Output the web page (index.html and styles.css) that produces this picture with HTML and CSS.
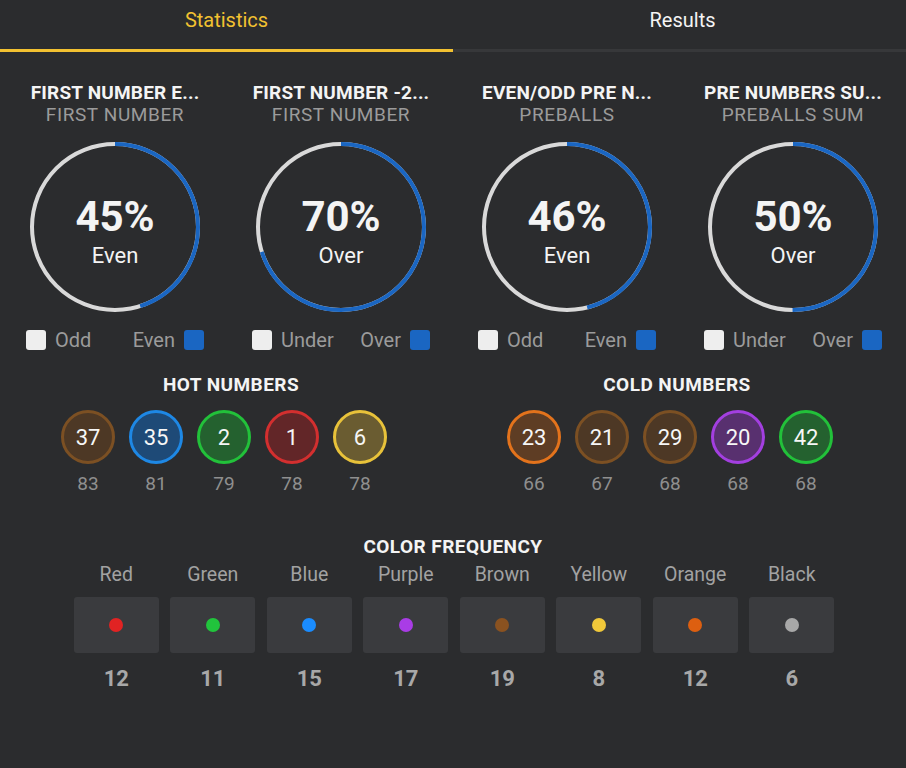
FILE: index.html
```html
<!DOCTYPE html>
<html lang="en">
<head>
<meta charset="utf-8">
<title>Statistics</title>
<link rel="stylesheet" href="styles.css">
</head>
<body>
<div class="tabs">
  <div class="tab active">Statistics</div>
  <div class="tab right">Results</div>
</div>

<div class="cards">
  <div class="card">
    <div class="card-title">FIRST NUMBER E...</div>
    <div class="card-sub">FIRST NUMBER</div>
    <div class="gauge">
      <svg class="ring" viewBox="0 0 170 170" width="170" height="170">
        <circle class="track" cx="85" cy="85" r="83"/>
        <circle class="fill" cx="85" cy="85" r="83" stroke-dasharray="234.7 521.5" transform="rotate(-90 85 85)"/>
      </svg>
      <div class="gauge-text"><div class="pct">45%</div><div class="pct-label">Even</div></div>
    </div>
    <div class="legend">
      <div class="leg"><span class="sq light"></span><span>Odd</span></div>
      <div class="leg"><span>Even</span><span class="sq blue"></span></div>
    </div>
  </div>

  <div class="card">
    <div class="card-title">FIRST NUMBER -2...</div>
    <div class="card-sub">FIRST NUMBER</div>
    <div class="gauge">
      <svg class="ring" viewBox="0 0 170 170" width="170" height="170">
        <circle class="track" cx="85" cy="85" r="83"/>
        <circle class="fill" cx="85" cy="85" r="83" stroke-dasharray="365.1 521.5" transform="rotate(-90 85 85)"/>
      </svg>
      <div class="gauge-text"><div class="pct">70%</div><div class="pct-label">Over</div></div>
    </div>
    <div class="legend">
      <div class="leg"><span class="sq light"></span><span>Under</span></div>
      <div class="leg"><span>Over</span><span class="sq blue"></span></div>
    </div>
  </div>

  <div class="card">
    <div class="card-title">EVEN/ODD PRE N...</div>
    <div class="card-sub">PREBALLS</div>
    <div class="gauge">
      <svg class="ring" viewBox="0 0 170 170" width="170" height="170">
        <circle class="track" cx="85" cy="85" r="83"/>
        <circle class="fill" cx="85" cy="85" r="83" stroke-dasharray="239.9 521.5" transform="rotate(-90 85 85)"/>
      </svg>
      <div class="gauge-text"><div class="pct">46%</div><div class="pct-label">Even</div></div>
    </div>
    <div class="legend">
      <div class="leg"><span class="sq light"></span><span>Odd</span></div>
      <div class="leg"><span>Even</span><span class="sq blue"></span></div>
    </div>
  </div>

  <div class="card">
    <div class="card-title">PRE NUMBERS SU...</div>
    <div class="card-sub">PREBALLS SUM</div>
    <div class="gauge">
      <svg class="ring" viewBox="0 0 170 170" width="170" height="170">
        <circle class="track" cx="85" cy="85" r="83"/>
        <circle class="fill" cx="85" cy="85" r="83" stroke-dasharray="260.8 521.5" transform="rotate(-90 85 85)"/>
      </svg>
      <div class="gauge-text"><div class="pct">50%</div><div class="pct-label">Over</div></div>
    </div>
    <div class="legend">
      <div class="leg"><span class="sq light"></span><span>Under</span></div>
      <div class="leg"><span>Over</span><span class="sq blue"></span></div>
    </div>
  </div>
</div>

<div class="hotcold">
  <div class="group">
    <div class="section-title">HOT NUMBERS</div>
    <div class="balls">
      <div class="ball-item"><div class="ball brown">37</div><div class="count">83</div></div>
      <div class="ball-item"><div class="ball blue">35</div><div class="count">81</div></div>
      <div class="ball-item"><div class="ball green">2</div><div class="count">79</div></div>
      <div class="ball-item"><div class="ball red">1</div><div class="count">78</div></div>
      <div class="ball-item"><div class="ball yellow">6</div><div class="count">78</div></div>
    </div>
  </div>
  <div class="group">
    <div class="section-title">COLD NUMBERS</div>
    <div class="balls">
      <div class="ball-item"><div class="ball orange">23</div><div class="count">66</div></div>
      <div class="ball-item"><div class="ball brown">21</div><div class="count">67</div></div>
      <div class="ball-item"><div class="ball brown">29</div><div class="count">68</div></div>
      <div class="ball-item"><div class="ball purple">20</div><div class="count">68</div></div>
      <div class="ball-item"><div class="ball green">42</div><div class="count">68</div></div>
    </div>
  </div>
</div>

<div class="freq">
  <div class="section-title">COLOR FREQUENCY</div>
  <div class="freq-row">
    <div class="freq-item"><div class="freq-name">Red</div><div class="freq-box"><span class="dot d-red"></span></div><div class="freq-num">12</div></div>
    <div class="freq-item"><div class="freq-name">Green</div><div class="freq-box"><span class="dot d-green"></span></div><div class="freq-num">11</div></div>
    <div class="freq-item"><div class="freq-name">Blue</div><div class="freq-box"><span class="dot d-blue"></span></div><div class="freq-num">15</div></div>
    <div class="freq-item"><div class="freq-name">Purple</div><div class="freq-box"><span class="dot d-purple"></span></div><div class="freq-num">17</div></div>
    <div class="freq-item"><div class="freq-name">Brown</div><div class="freq-box"><span class="dot d-brown"></span></div><div class="freq-num">19</div></div>
    <div class="freq-item"><div class="freq-name">Yellow</div><div class="freq-box"><span class="dot d-yellow"></span></div><div class="freq-num">8</div></div>
    <div class="freq-item"><div class="freq-name">Orange</div><div class="freq-box"><span class="dot d-orange"></span></div><div class="freq-num">12</div></div>
    <div class="freq-item"><div class="freq-name">Black</div><div class="freq-box"><span class="dot d-black"></span></div><div class="freq-num">6</div></div>
  </div>
</div>
</body>
</html>
```

FILE: styles.css
```css
html, body {
  margin: 0;
  padding: 0;
}
body {
  background: #2b2c2e;
  font-family: Roboto, "Noto Sans", "Liberation Sans", sans-serif;
  color: #f2f2f2;
  width: 906px;
  height: 768px;
  overflow: hidden;
}

/* tabs */
.tabs {
  display: grid;
  grid-template-columns: 453px 453px;
}
.tab {
  height: 52px;
  padding-top: 9px;
  box-sizing: border-box;
  line-height: 22px;
  font-size: 20px;
  text-align: center;
  color: #f4f4f4;
  border-bottom: 3px solid #37383a;
}
.tab.right {
  padding-left: 6px;
}
.tab.active {
  color: #f2c131;
  border-bottom-color: #f2c131;
}

/* cards */
.cards {
  display: grid;
  grid-template-columns: repeat(4, 226px);
  padding: 30px 0 0 2px;
}
.card {
  padding: 0 24px;
  display: flex;
  flex-direction: column;
  align-items: center;
}
.card-title {
  width: 178px;
  font-size: 19px;
  letter-spacing: 0.2px;
  line-height: 22px;
  font-weight: 700;
  text-align: center;
  white-space: nowrap;
  overflow: hidden;
  color: #f4f4f4;
}
.card-sub {
  width: 178px;
  font-size: 19px;
  letter-spacing: 0.6px;
  line-height: 22px;
  text-align: center;
  white-space: nowrap;
  color: #9b9b9b;
}
.gauge {
  margin-top: 16px;
  display: grid;
  width: 170px;
  height: 170px;
}
.gauge > * {
  grid-area: 1 / 1;
}
.ring {
  display: block;
}
.track {
  fill: none;
  stroke: #d9d9d9;
  stroke-width: 4;
}
.fill {
  fill: none;
  stroke: #1a66c2;
  stroke-width: 4;
}
.gauge-text {
  align-self: start;
  margin-top: 52px;
  text-align: center;
}
.pct {
  font-size: 42px;
  line-height: 46px;
  font-weight: 700;
  color: #f4f4f4;
}
.pct-label {
  font-size: 22px;
  line-height: 32px;
  color: #f4f4f4;
}
.legend {
  margin-top: 16px;
  width: 178px;
  height: 24px;
  display: flex;
  justify-content: space-between;
  align-items: center;
  font-size: 20px;
  color: #9b9b9b;
}
.leg {
  display: flex;
  align-items: center;
  gap: 9px;
}
.sq {
  width: 20px;
  height: 20px;
  border-radius: 3px;
  display: block;
}
.sq.light { background: #eeeeee; }
.sq.blue { background: #1a66c2; }

/* hot / cold */
.hotcold {
  display: grid;
  grid-template-columns: 446px 446px;
  padding: 22px 8px 0;
}
.group {
  display: flex;
  flex-direction: column;
  align-items: center;
}
.section-title {
  font-size: 19px;
  letter-spacing: 0.45px;
  line-height: 22px;
  font-weight: 700;
  color: #f4f4f4;
  text-align: center;
}
.balls {
  display: flex;
  margin-top: 14px;
}
.ball-item {
  width: 54px;
  margin-right: 14px;
  display: flex;
  flex-direction: column;
  align-items: center;
}
.ball {
  width: 54px;
  height: 54px;
  box-sizing: border-box;
  border-radius: 50%;
  border: 3px solid;
  display: flex;
  align-items: center;
  justify-content: center;
  font-size: 22px;
  color: #f6f6f6;
}
.ball.brown { border-color: #7c5023; background: #4d3825; }
.ball.blue { border-color: #1e88e5; background: #1e4a77; }
.ball.green { border-color: #22c13a; background: #24612f; }
.ball.red { border-color: #d32f2f; background: #622628; }
.ball.yellow { border-color: #e8c23a; background: #6a5c31; }
.ball.orange { border-color: #e3731c; background: #5e3d24; }
.ball.purple { border-color: #a33fe0; background: #58306f; }
.count {
  margin-top: 9px;
  font-size: 19px;
  line-height: 22px;
  color: #8f8f8f;
}

/* color frequency */
.freq {
  padding-top: 41px;
  display: flex;
  flex-direction: column;
  align-items: center;
}
.freq-row {
  display: flex;
  gap: 11.5px;
  margin-top: 6px;
  padding-left: 2px;
}
.freq-item {
  width: 85px;
  display: flex;
  flex-direction: column;
  align-items: center;
}
.freq-name {
  font-size: 19.5px;
  line-height: 22px;
  color: #a2a2a2;
}
.freq-box {
  margin-top: 11px;
  width: 85px;
  height: 56px;
  border-radius: 3px;
  background: #3a3b3e;
  display: flex;
  align-items: center;
  justify-content: center;
}
.dot {
  width: 14px;
  height: 14px;
  border-radius: 50%;
  display: block;
}
.d-red { background: #e12323; }
.d-green { background: #21c43c; }
.d-blue { background: #1a8cff; }
.d-purple { background: #a93ce6; }
.d-brown { background: #8a5220; }
.d-yellow { background: #f0c83a; }
.d-orange { background: #dd5f10; }
.d-black { background: #a8a8a8; }
.freq-num {
  margin-top: 13px;
  font-size: 22px;
  line-height: 26px;
  font-weight: 700;
  color: #a8a8a8;
}
```
